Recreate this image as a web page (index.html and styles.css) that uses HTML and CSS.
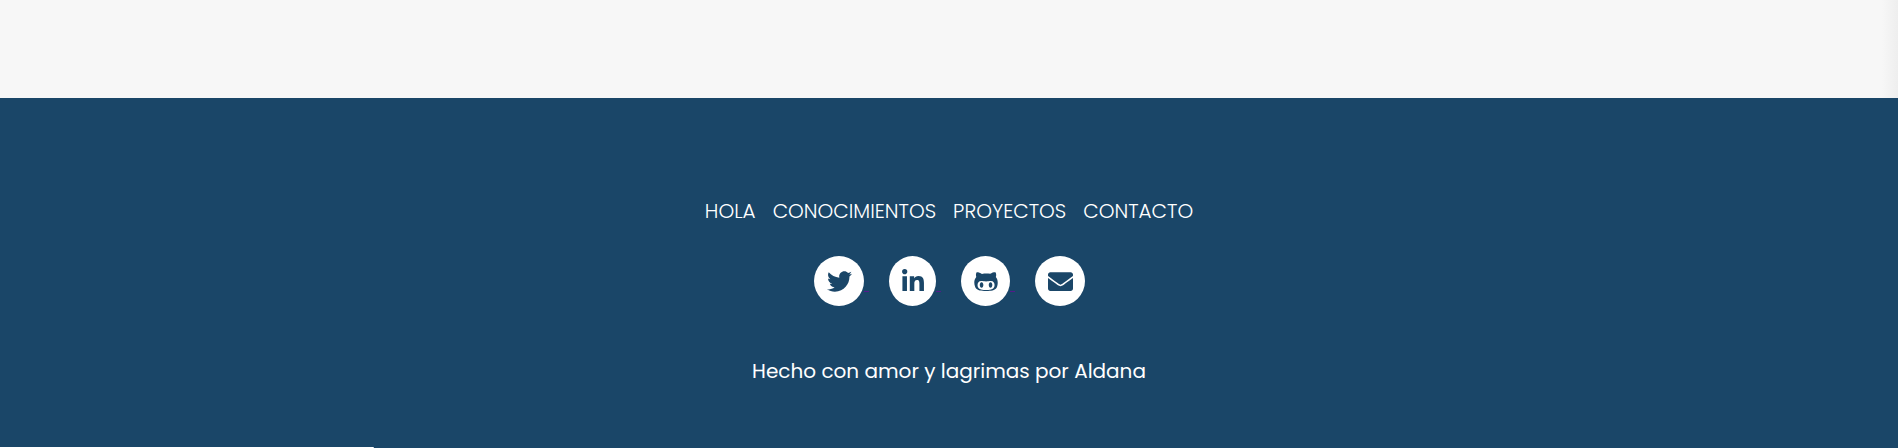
FILE: index.html
```html
<!DOCTYPE html>
<html lang="es">
<head>
<meta charset="utf-8">
<title>Aldana</title>
<link rel="stylesheet" href="styles.css">
</head>
<body>
<main class="page-end"></main>
<footer class="footer">
  <nav class="footer-nav">
    <a href="#hola">HOLA</a>
    <a href="#conocimientos">CONOCIMIENTOS</a>
    <a href="#proyectos">PROYECTOS</a>
    <a href="#contacto">CONTACTO</a>
  </nav>
  <div class="social">
    <a class="social-link" href="#twitter" aria-label="Twitter"><svg viewBox="0 0 512 512" width="25" height="25"><path d="M459.37 151.716c.325 4.548.325 9.097.325 13.645 0 138.72-105.583 298.558-298.558 298.558-59.452 0-114.68-17.219-161.137-47.106 8.447.974 16.568 1.299 25.34 1.299 49.055 0 94.213-16.568 130.274-44.832-46.132-.975-84.792-31.188-98.112-72.772 6.498.974 12.995 1.624 19.818 1.624 9.421 0 18.843-1.3 27.614-3.573-48.081-9.747-84.143-51.98-84.143-102.985v-1.299c13.969 7.797 30.214 12.67 47.431 13.319-28.264-18.843-46.781-51.005-46.781-87.391 0-19.492 5.197-37.36 14.294-52.954 51.655 63.675 129.3 105.258 216.365 109.807-1.624-7.797-2.599-15.918-2.599-24.04 0-57.828 46.782-104.934 104.934-104.934 30.213 0 57.502 12.67 76.67 33.137 23.715-4.548 46.456-13.32 66.599-25.34-7.798 24.366-24.366 44.833-46.132 57.827 21.117-2.273 41.584-8.122 60.426-16.243-14.292 20.791-32.161 39.308-52.628 54.253z"/></svg></a>
    <a class="social-link social-link-linkedin" href="#linkedin" aria-label="LinkedIn"><svg viewBox="0 0 448 512" width="22" height="25"><path d="M100.28 448H7.4V148.9h92.88zM53.79 108.1C24.09 108.1 0 83.5 0 53.8a53.79 53.79 0 0 1 107.58 0c0 29.7-24.1 54.3-53.79 54.3zM447.9 448h-92.68V302.4c0-34.7-.7-79.2-48.29-79.2-48.29 0-55.69 37.7-55.69 76.7V448h-92.78V148.9h89.08v40.8h1.3c12.4-23.5 42.69-48.3 87.88-48.3 94 0 111.28 61.9 111.28 142.3V448z"/></svg></a>
    <a class="social-link social-link-github" href="#github" aria-label="GitHub"><svg viewBox="0 0 480 512" width="24" height="25"><path d="M186.1 328.7c0 20.9-10.9 55.1-36.7 55.1s-36.7-34.2-36.7-55.1 10.9-55.1 36.7-55.1 36.7 34.2 36.7 55.1zM480 278.2c0 31.9-3.2 65.7-17.5 95-37.9 76.6-142.1 74.8-216.7 74.8-75.8 0-186.2 2.7-225.6-74.8-14.6-29-20.2-63.1-20.2-95 0-41.9 13.9-81.5 41.5-113.6-5.2-15.8-7.7-32.4-7.7-48.8 0-21.5 4.9-32.3 14.6-51.8 45.3 0 74.3 9 108.8 36 29-6.9 58.8-10 88.7-10 27 0 54.2 2.9 80.4 9.2 34-26.7 63-35.2 107.8-35.2 9.8 19.5 14.6 30.3 14.6 51.8 0 16.4-2.6 32.7-7.7 48.2 27.5 32.4 39 72.3 39 114.2zm-64.3 50.5c0-43.9-26.7-82.6-73.5-82.6-18.9 0-37 3.4-56 6-14.9 2.3-29.8 3.2-45.1 3.2-15.2 0-30.1-.9-45.1-3.2-18.7-2.6-37-6-56-6-46.8 0-73.5 38.7-73.5 82.6 0 87.8 80.4 101.3 150.4 101.3h48.2c70.3 0 150.6-13.4 150.6-101.3zm-82.6-55.1c-25.8 0-36.7 34.2-36.7 55.1s10.9 55.1 36.7 55.1 36.7-34.2 36.7-55.1-10.9-55.1-36.7-55.1z"/></svg></a>
    <a class="social-link" href="#correo" aria-label="Correo"><svg viewBox="0 0 512 512" width="25" height="25"><path d="M502.3 190.8c3.9-3.1 9.7-.2 9.7 4.7V400c0 26.5-21.5 48-48 48H48c-26.500 0-48-21.500-48-48V195.600c0-5 5.700-7.800 9.700-4.700 22.400 17.400 52.100 39.500 154.100 113.600 21.100 15.400 56.700 47.800 92.200 47.600 35.700.3 72-32.800 92.300-47.600 102-74.100 131.600-96.300 154-113.700zM256 320c23.200.4 56.600-29.200 73.400-41.400 132.700-96.300 142.800-104.700 173.400-128.700 5.800-4.500 9.200-11.500 9.200-18.900v-19c0-26.500-21.500-48-48-48H48c-26.500 0-48 21.500-48 48v19c0 7.400 3.400 14.300 9.200 18.900 30.600 23.900 40.700 32.400 173.400 128.700 16.800 12.200 50.200 41.800 73.400 41.400z"/></svg></a>
  </div>
  <p class="credit">Hecho con amor y lagrimas por Aldana</p>
</footer>
<div class="status-edge"></div>
</body>
</html>
```
FILE: styles.css
```css
* {
  box-sizing: border-box;
}

body {
  margin: 0;
  background: #f7f7f7;
  color: #fff;
  font-family: Poppins, Inter, "Open Sans", sans-serif;
  font-size: 20px;
  line-height: 30px;
}

.page-end {
  height: 98px;
  background: linear-gradient(to left, #eeeeee, #f7f7f7 16px);
}

.footer {
  display: flex;
  flex-direction: column;
  align-items: center;
  padding: 98px 20px 62px;
  background: #1a4668;
}

.footer-nav {
  display: flex;
  flex-wrap: wrap;
  justify-content: center;
  gap: 17px;
}

.footer-nav a {
  color: #fff;
  font-weight: 300;
  text-decoration: none;
}

.social {
  display: flex;
  gap: 25px;
  margin-top: 30px;
}

.social-link {
  position: relative;
  display: flex;
  align-items: center;
  justify-content: center;
  width: 50px;
  height: 50px;
  padding-left: 1px;
  border-radius: 50%;
  background: #fff;
}

.social-link-linkedin {
  width: 47px;
}

.social-link-github {
  width: 49px;
}

.social-link svg {
  display: block;
  fill: #1a4668;
}

.social-link:not(:last-child)::after {
  content: "";
  position: absolute;
  top: 35px;
  left: 100%;
  width: 5px;
  height: 1px;
  background: #551a8b;
}

.credit {
  margin: 50px 0 0;
  font-weight: 400;
  text-align: center;
}

.status-edge {
  position: fixed;
  bottom: 0;
  left: 0;
  width: 374px;
  height: 1px;
  border-top-right-radius: 1px;
  background: #fff;
}
```
